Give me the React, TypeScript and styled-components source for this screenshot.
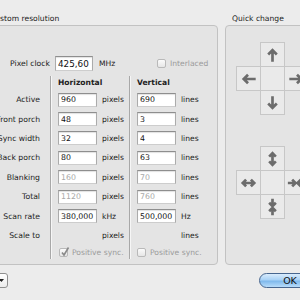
import React from "react";
import styled, { createGlobalStyle } from "styled-components";

const GlobalStyle = createGlobalStyle`
  html, body {
    margin: 0;
    padding: 0;
    background: #ececec;
    overflow: hidden;
  }
  body {
    font-family: "DejaVu Sans", "Liberation Sans", sans-serif;
    color: #222;
  }
`;

const Window = styled.div`
  width: 360px;
  margin-left: -18px;
  padding-top: 13px;
  display: flex;
  flex-direction: column;
`;

const Panels = styled.div`
  display: flex;
  gap: 7px;
`;

const Group = styled.div<{ $w: number }>`
  width: ${(p) => p.$w}px;
  display: flex;
  flex-direction: column;
`;

const GroupTitle = styled.div<{ $indent: number }>`
  height: 12px;
  line-height: 12px;
  font-size: 7.6px;
  color: #222;
  padding-left: ${(p) => p.$indent}px;
  white-space: nowrap;
`;

const GroupBox = styled.div<{ $pad: string }>`
  height: 240px;
  box-sizing: border-box;
  border: 1px solid #c2c2c2;
  border-radius: 4px;
  background: #e4e4e4;
  padding: ${(p) => p.$pad};
  display: flex;
  flex-direction: column;
`;

const ClockRow = styled.div`
  display: flex;
  align-items: center;
  height: 15px;
`;

const ClockLabel = styled.div`
  width: 67px;
  margin-right: 5px;
  text-align: right;
  font-size: 7.7px;
  white-space: nowrap;
`;

const Field = styled.input<{ $w: number; $h: number; $fs: number; $dim?: boolean }>`
  width: ${(p) => p.$w}px;
  height: ${(p) => p.$h}px;
  box-sizing: border-box;
  margin: 0;
  padding: 0 0 0 2px;
  border: 1px solid #ababab;
  border-top-color: #8e8e8e;
  border-bottom-color: #cdcdcd;
  box-shadow: inset 0 1px 1px rgba(0, 0, 0, 0.12);
  background: #fff;
  font-family: "DejaVu Sans", sans-serif;
  font-size: ${(p) => p.$fs}px;
  color: ${(p) => (p.$dim ? "#a9a9a9" : "#111")};
  outline: none;
`;

const Unit = styled.div<{ $w?: number; $dim?: boolean }>`
  font-size: 7.6px;
  white-space: nowrap;
  color: ${(p) => (p.$dim ? "#9b9b9b" : "#222")};
  ${(p) => (p.$w ? `width: ${p.$w}px;` : "")}
`;

const CheckWrap = styled.div`
  display: flex;
  align-items: center;
  gap: 4px;
`;

const CheckBox = styled.div`
  width: 9px;
  height: 9px;
  box-sizing: border-box;
  border: 1px solid #b9b9b9;
  border-radius: 2px;
  background: linear-gradient(#fbfbfb, #e6e6e6);
  position: relative;
`;

const Tick = styled.svg`
  position: absolute;
  left: 0;
  top: -3px;
`;

const Table = styled.div`
  display: flex;
  margin-top: 5px;
`;

const LabelCol = styled.div`
  width: 57px;
  display: flex;
  flex-direction: column;
`;

const DataCol = styled.div<{ $w: number; $gap: number }>`
  width: ${(p) => p.$w}px;
  margin-left: ${(p) => p.$gap}px;
  box-sizing: border-box;
  padding-left: 7px;
  border-left: 1px solid #a8a8a8;
  box-shadow: inset 1px 0 0 #f6f6f6;
  display: flex;
  flex-direction: column;
`;

const HeadCell = styled.div`
  height: 14px;
  line-height: 14px;
  font-size: 7.6px;
  font-weight: bold;
  white-space: nowrap;
`;

const Cell = styled.div<{ $h?: number; $right?: boolean }>`
  height: ${(p) => p.$h ?? 19.4}px;
  display: flex;
  align-items: center;
  gap: 5px;
  justify-content: ${(p) => (p.$right ? "flex-end" : "flex-start")};
  font-size: 7.7px;
  white-space: nowrap;
`;

const Spacer = styled.div`
  width: 39px;
`;

const Pads = styled.div`
  display: flex;
  flex-direction: column;
  gap: 32px;
`;

const Pad = styled.div`
  display: grid;
  grid-template-columns: repeat(3, 24px);
  grid-template-rows: repeat(3, 24px);
`;

const PadCell = styled.div<{ $col: number; $row: number }>`
  grid-column: ${(p) => p.$col};
  grid-row: ${(p) => p.$row};
  margin: 0 -1px -1px 0;
  border: 1px solid #c7c7c7;
  background: #eaeaea;
  display: flex;
  align-items: center;
  justify-content: center;
`;

const BottomRow = styled.div`
  margin-top: 8px;
  padding-right: 21px;
  display: flex;
  justify-content: space-between;
  align-items: center;
`;

const Popup = styled.div`
  width: 26px;
  height: 15px;
  box-sizing: border-box;
  border: 1px solid #8f8f8f;
  border-radius: 3px;
  background: linear-gradient(#ffffff, #ececec);
  display: flex;
  align-items: center;
  justify-content: flex-end;
  padding-right: 3px;
`;

const OkButton = styled.div`
  width: 62px;
  height: 15px;
  box-sizing: border-box;
  border: 1px solid #47668f;
  border-radius: 8px;
  background: linear-gradient(#d9ecfc 0%, #a9d2f6 45%, #7fb9ec 55%, #b8dcfa 100%);
  display: flex;
  align-items: center;
  justify-content: center;
  font-size: 9.5px;
  color: #111;
`;

const arrows: Record<string, string> = {
  up: "M12 19V7 M7.5 11.5 L12 7 L16.5 11.5",
  down: "M12 5V17 M7.5 12.5 L12 17 L16.5 12.5",
  left: "M19.5 12H7 M11.5 7.5 L7 12 L11.5 16.5",
  right: "M4.5 12H17 M12.5 7.5 L17 12 L12.5 16.5",
  updown: "M12 7V17 M8.5 9.5 L12 6 L15.5 9.5 M8.5 14.5 L12 18 L15.5 14.5",
  leftright: "M7 12H17 M9.5 8.5 L6 12 L9.5 15.5 M14.5 8.5 L18 12 L14.5 15.5",
  inH: "M3 12H10 M7.5 8.5 L11 12 L7.5 15.5 M21 12H14 M16.5 8.5 L13 12 L16.5 15.5",
  inV: "M12 3.5V10 M8.5 7.5 L12 11 L15.5 7.5 M12 20.5V14 M8.5 16.5 L12 13 L15.5 16.5",
};

const Arrow = ({ kind }: { kind: string }) => (
  <svg width="24" height="24" viewBox="0 0 24 24">
    <path d={arrows[kind]} fill="none" stroke="#6c6c6c" strokeWidth="2.8" />
  </svg>
);

const Check = ({ checked }: { checked?: boolean }) => (
  <CheckBox>
    {checked && (
      <Tick width="10" height="11" viewBox="0 0 10 11">
        <path d="M2 6.5 L4 9 L8.5 1.5" fill="none" stroke="#8a8a8a" strokeWidth="1.6" />
      </Tick>
    )}
  </CheckBox>
);

type Row = { label: string; h?: string; v?: string; dim?: boolean; hu: string; vu: string };

const rows: Row[] = [
  { label: "Active", h: "960", v: "690", hu: "pixels", vu: "lines" },
  { label: "Front porch", h: "48", v: "3", hu: "pixels", vu: "lines" },
  { label: "Sync width", h: "32", v: "4", hu: "pixels", vu: "lines" },
  { label: "Back porch", h: "80", v: "63", hu: "pixels", vu: "lines" },
  { label: "Blanking", h: "160", v: "70", dim: true, hu: "pixels", vu: "lines" },
  { label: "Total", h: "1120", v: "760", dim: true, hu: "pixels", vu: "lines" },
  { label: "Scan rate", h: "380,000", v: "500,000", hu: "kHz", vu: "Hz" },
  { label: "Scale to", hu: "pixels", vu: "lines" },
];

const ValueCell = ({ value, unit, dim }: { value?: string; unit: string; dim?: boolean }) => (
  <Cell>
    {value !== undefined ? (
      <Field $w={39} $h={14} $fs={7.8} $dim={dim} value={value} readOnly />
    ) : (
      <Spacer />
    )}
    <Unit>{unit}</Unit>
  </Cell>
);

const pad1 = [
  { col: 2, row: 1, kind: "up" },
  { col: 1, row: 2, kind: "left" },
  { col: 2, row: 2, kind: "" },
  { col: 3, row: 2, kind: "right" },
  { col: 2, row: 3, kind: "down" },
];

const pad2 = [
  { col: 2, row: 1, kind: "updown" },
  { col: 1, row: 2, kind: "leftright" },
  { col: 2, row: 2, kind: "" },
  { col: 3, row: 2, kind: "inH" },
  { col: 2, row: 3, kind: "inV" },
];

const App = () => {
  return (
    <Window>
      <GlobalStyle />
      <Panels>
        <Group $w={236}>
          <GroupTitle $indent={8}>Custom resolution</GroupTitle>
          <GroupBox $pad="30px 0 0 0">
            <ClockRow>
              <ClockLabel>Pixel clock</ClockLabel>
              <Field $w={38} $h={15} $fs={8.8} value="425,60" readOnly />
              <Unit $w={58} style={{ marginLeft: 6 }}>
                MHz
              </Unit>
              <CheckWrap>
                <Check />
                <Unit $dim>Interlaced</Unit>
              </CheckWrap>
            </ClockRow>
            <Table>
              <LabelCol>
                <HeadCell />
                {rows.map((r) => (
                  <Cell key={r.label} $right>
                    {r.label}
                  </Cell>
                ))}
              </LabelCol>
              <DataCol $w={79} $gap={10}>
                <HeadCell>Horizontal</HeadCell>
                {rows.map((r) => (
                  <ValueCell key={r.label} value={r.h} unit={r.hu} dim={r.dim} />
                ))}
                <Cell $h={14} style={{ paddingLeft: 1 }}>
                  <CheckWrap>
                    <Check checked />
                    <Unit $dim>Positive sync.</Unit>
                  </CheckWrap>
                </Cell>
              </DataCol>
              <DataCol $w={82} $gap={0}>
                <HeadCell>Vertical</HeadCell>
                {rows.map((r) => (
                  <ValueCell key={r.label} value={r.v} unit={r.vu} dim={r.dim} />
                ))}
                <Cell $h={14}>
                  <CheckWrap>
                    <Check />
                    <Unit $dim>Positive sync.</Unit>
                  </CheckWrap>
                </Cell>
              </DataCol>
            </Table>
          </GroupBox>
        </Group>
        <Group $w={100}>
          <GroupTitle $indent={7}>Quick change</GroupTitle>
          <GroupBox $pad="16px 0 0 10px">
            <Pads>
              {[pad1, pad2].map((pad, i) => (
                <Pad key={i}>
                  {pad.map((c) => (
                    <PadCell key={c.col + "-" + c.row} $col={c.col} $row={c.row}>
                      {c.kind && <Arrow kind={c.kind} />}
                    </PadCell>
                  ))}
                </Pad>
              ))}
            </Pads>
          </GroupBox>
        </Group>
      </Panels>
      <BottomRow>
        <Popup>
          <svg width="5" height="3" viewBox="0 0 5 3">
            <path d="M0 0H5L2.5 3Z" fill="#222" />
          </svg>
        </Popup>
        <OkButton>OK</OkButton>
      </BottomRow>
    </Window>
  );
};

export default App;
